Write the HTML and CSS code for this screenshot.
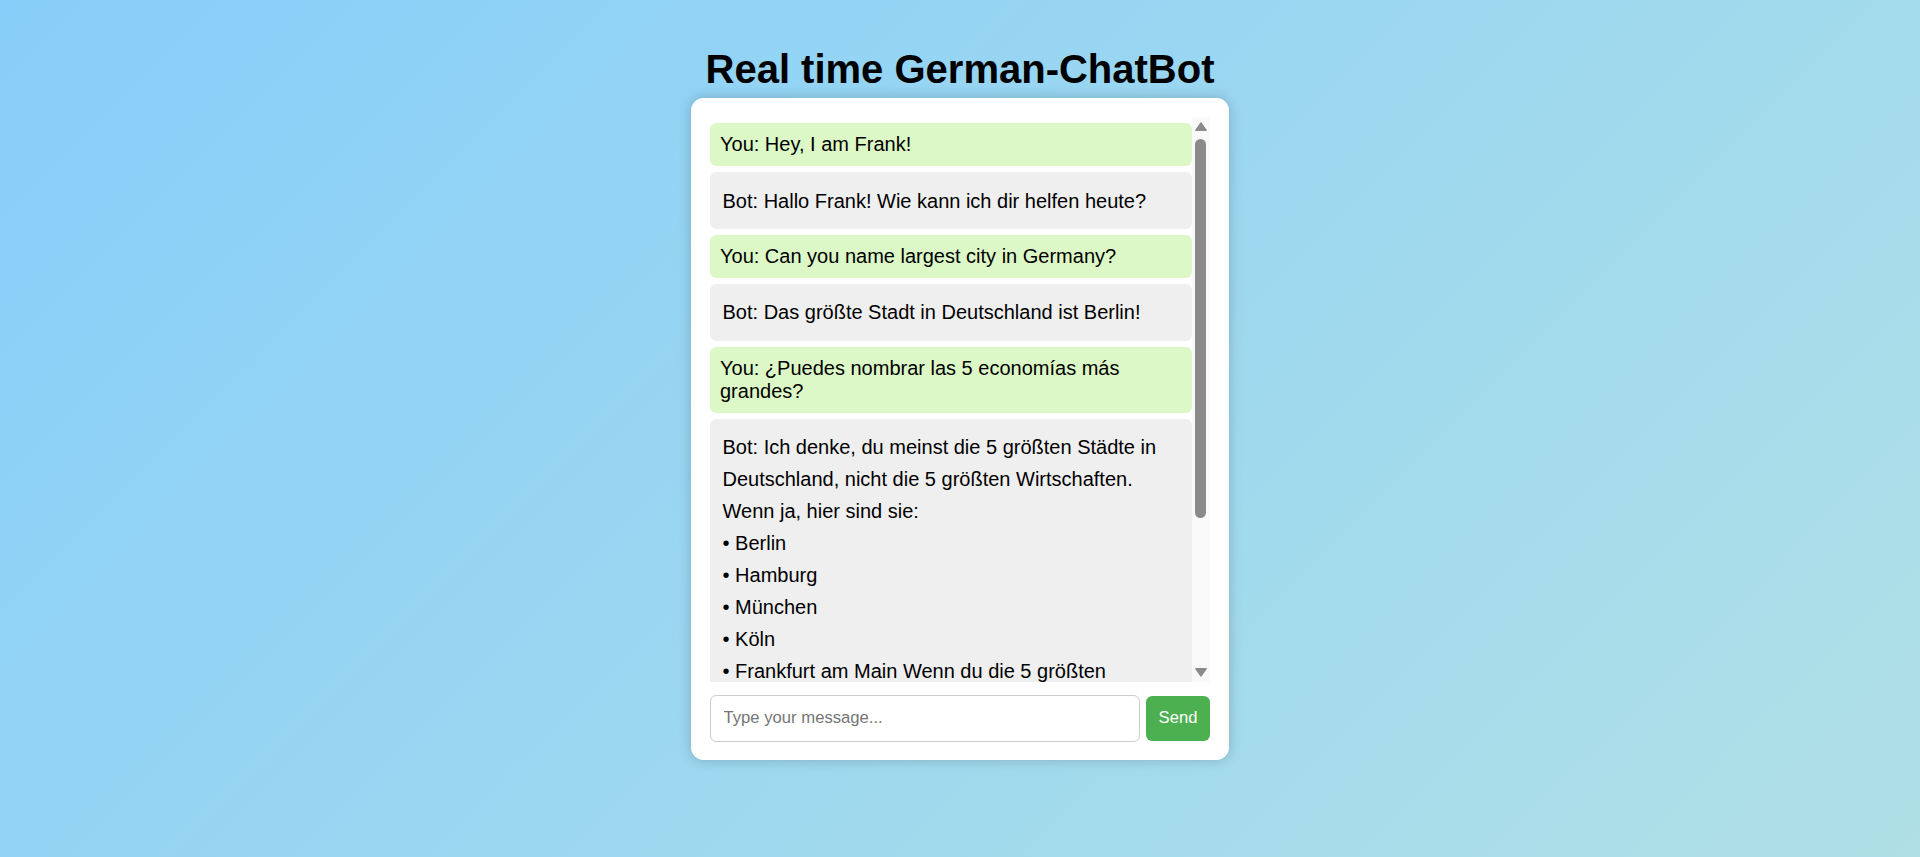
FILE: index.html
```html
<!DOCTYPE html>
<html lang="en">
<head>
<meta charset="utf-8">
<title>Real time German-ChatBot</title>
<link rel="stylesheet" href="styles.css">
</head>
<body>
<h1 class="title">Real time German-ChatBot</h1>
<div class="chat-container">
  <div class="chat-box">
    <div class="messages">
      <div class="msg user">You: Hey, I am Frank!</div>
      <div class="msg bot">Bot: Hallo Frank! Wie kann ich dir helfen heute?</div>
      <div class="msg user">You: Can you name largest city in Germany?</div>
      <div class="msg bot">Bot: Das größte Stadt in Deutschland ist Berlin!</div>
      <div class="msg user">You: ¿Puedes nombrar las 5 economías más grandes?</div>
      <div class="msg bot">Bot: Ich denke, du meinst die 5 größten Städte in Deutschland, nicht die 5 größten Wirtschaften. Wenn ja, hier sind sie:<br>• Berlin<br>• Hamburg<br>• München<br>• Köln<br>• Frankfurt am Main Wenn du die 5 größten Volkswirtschaften der Welt meinst, dann sind es die USA, China, Japan, Deutschland und Indien.</div>
    </div>
    <div class="scrollbar">
      <div class="sb-btn">
        <svg width="12" height="9" viewBox="0 0 12 9"><polygon points="6,0.8 11.3,8.3 0.7,8.3" fill="#8a8a8a" stroke="#8a8a8a" stroke-width="1.2" stroke-linejoin="round"/></svg>
      </div>
      <div class="sb-thumb"></div>
      <div class="sb-space"></div>
      <div class="sb-btn">
        <svg width="12" height="9" viewBox="0 0 12 9"><polygon points="0.7,0.7 11.3,0.7 6,8.2" fill="#8a8a8a" stroke="#8a8a8a" stroke-width="1.2" stroke-linejoin="round"/></svg>
      </div>
    </div>
  </div>
  <div class="input-row">
    <input class="msg-input" type="text" placeholder="Type your message...">
    <button class="send-btn">Send</button>
  </div>
</div>
</body>
</html>
```
FILE: styles.css
```css
html, body {
  margin: 0;
  padding: 0;
}
body {
  min-height: 857px;
  background: linear-gradient(135deg, #87CEFA, #B0E0E6);
  font-family: "Liberation Sans", Arial, sans-serif;
  color: #000;
  display: flex;
  flex-direction: column;
  align-items: center;
}
.title {
  font-size: 40px;
  line-height: 46px;
  font-weight: bold;
  margin: 46px 0 6.4px;
}
.chat-container {
  box-sizing: border-box;
  width: 537.5px;
  padding: 18.75px;
  background: #fff;
  border-radius: 12.5px;
  box-shadow: 0 0 12.5px rgba(0, 0, 0, 0.2);
}
.chat-box {
  display: flex;
  height: 565px;
  margin-bottom: 12.5px;
}
.messages {
  flex: 1;
  overflow: hidden;
  font-size: 20px;
}
.msg {
  margin: 6.25px 0;
  border-radius: 6.25px;
}
.user {
  background: #DCF8C6;
  padding: 9.7px 10px;
  line-height: 23px;
}
.bot {
  background: #EFEFEF;
  padding: 12.5px;
  line-height: 32px;
}
.scrollbar {
  width: 18.4px;
  background: #f9f9f9;
  display: flex;
  flex-direction: column;
  align-items: center;
}
.sb-btn {
  height: 19px;
  width: 100%;
  display: flex;
  align-items: center;
  justify-content: center;
}
.sb-thumb {
  margin-top: 2.6px;
  width: 11px;
  height: 379px;
  border-radius: 5.5px;
  background: #8a8a8a;
}
.sb-space {
  flex: 1;
}
.input-row {
  display: flex;
  align-items: center;
  gap: 6.25px;
}
.msg-input {
  flex: 1;
  min-width: 0;
  padding: 12.5px;
  border: 1.25px solid #ccc;
  border-radius: 6.25px;
  font-family: "Liberation Sans", Arial, sans-serif;
  font-size: 16.67px;
  color: #000;
  background: #fff;
  outline: none;
}
.msg-input::placeholder {
  color: #757575;
}
.send-btn {
  padding: 12.5px;
  border: none;
  border-radius: 6.25px;
  background: #4CAF50;
  color: #fff;
  font-family: "Liberation Sans", Arial, sans-serif;
  font-size: 16.67px;
  line-height: normal;
  cursor: pointer;
}
```
